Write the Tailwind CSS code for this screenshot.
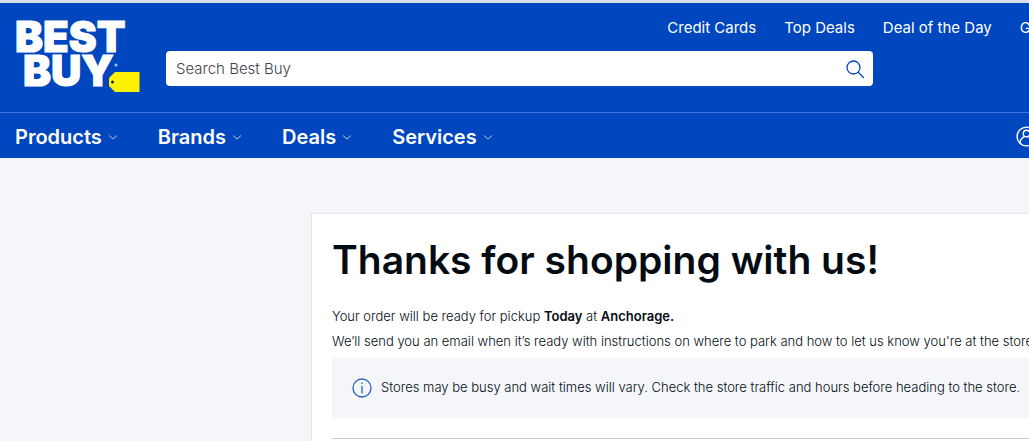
<!DOCTYPE html>
<html lang="en">
<head>
    <meta charset="UTF-8">
    <meta name="viewport" content="width=device-width, initial-scale=1.0">
    <title>Order Confirmation - Best Buy</title>
    <script src="https://cdn.jsdelivr.net/npm/@tailwindcss/browser@4"></script>
</head>
<body class="flex min-h-screen flex-col overflow-x-hidden bg-[#f4f6fa] font-['Inter',sans-serif] text-[#040c13]">
    <header class="border-t-3 border-[#d9dfe8] bg-[#0046be] text-white">
        <div class="flex h-[109px] overflow-hidden">
            <a href="#" aria-label="Best Buy" class="w-[166px] shrink-0">
                <svg class="h-[109px] w-[166px]" viewBox="0 3 166 109">
                    <g fill="#fff" stroke="#fff" stroke-width="1" font-family="Inter, sans-serif" font-weight="900" font-size="42">
                        <text x="15" y="52">BEST</text>
                        <text x="23" y="86">BUY</text>
                    </g>
                    <circle cx="116" cy="65" r="1.5" fill="#a9c2ee"/>
                    <path d="M115 72H139.500V92H115L109 86V78Z" fill="#fff200"/>
                    <circle cx="112.500" cy="82" r="1.500" fill="#1d252c"/>
                </svg>
            </a>
            <div class="min-w-0 grow">
                <nav class="-mr-0.5 flex h-12 items-center justify-end gap-7 pt-0.5 text-[15px] whitespace-nowrap">
                    <a href="#">Credit Cards</a>
                    <a href="#">Top Deals</a>
                    <a href="#">Deal of the Day</a>
                    <a href="#">G</a>
                </nav>
                <form class="flex h-[35px] max-w-[707px] items-center rounded bg-white">
                    <input type="text" aria-label="Search Best Buy" placeholder="Search Best Buy" class="h-full min-w-0 grow rounded px-2.5 text-[15px] font-light text-[#1d252c] outline-none placeholder:text-[#40444a]">
                    <button type="button" aria-label="Search" class="px-2">
                        <svg class="size-5" viewBox="0 0 20 20" fill="none" stroke="#0046be" stroke-width="1.3">
                            <circle cx="8.500" cy="8.500" r="6.500"/>
                            <path d="M13 13L19 19"/>
                        </svg>
                    </button>
                </form>
            </div>
        </div>
        <div class="flex h-[46px] items-center justify-between overflow-hidden border-t border-[#3f76dc] pt-0.5 pl-[15px]">
            <nav class="flex gap-10 text-[20px] font-semibold">
                <button type="button" class="flex items-center gap-1.5">Products
                    <svg class="size-2.5" viewBox="0 0 10 10" fill="none" stroke="#b8ccf2"><path d="M1 3.500L5 7L9 3.500"/></svg>
                </button>
                <button type="button" class="flex items-center gap-1.5">Brands
                    <svg class="size-2.5" viewBox="0 0 10 10" fill="none" stroke="#b8ccf2"><path d="M1 3.500L5 7L9 3.500"/></svg>
                </button>
                <button type="button" class="flex items-center gap-1.5">Deals
                    <svg class="size-2.5" viewBox="0 0 10 10" fill="none" stroke="#b8ccf2"><path d="M1 3.500L5 7L9 3.500"/></svg>
                </button>
                <button type="button" class="flex items-center gap-1.5">Services
                    <svg class="size-2.5" viewBox="0 0 10 10" fill="none" stroke="#b8ccf2"><path d="M1 3.500L5 7L9 3.500"/></svg>
                </button>
            </nav>
            <button type="button" aria-label="Account" class="-mr-2">
                <svg class="size-[21px]" viewBox="0 0 21 21" fill="none" stroke="#fff" stroke-width="1.4">
                    <circle cx="10.500" cy="10.500" r="9.400"/>
                    <circle cx="10.500" cy="7.500" r="3.300"/>
                    <path d="M4 17C4.300 13.500 6.200 11.500 8.500 10.600M17 17C16.700 13.500 14.500 11.500 12.500 10.600"/>
                </svg>
            </button>
        </div>
    </header>

    <main class="mt-[55px] ml-[311px] grow overflow-hidden border-t border-l border-[#dfe3ea] bg-white pl-5 whitespace-nowrap">
        <h1 class="mt-5 text-[39px] leading-[52px] font-semibold">Thanks for shopping with us!</h1>
        <div class="mt-[18px] text-[13px] leading-[25px] font-light">
            <p>Your order will be ready for pickup <b class="font-semibold">Today</b> at <b class="font-semibold">Anchorage.</b></p>
            <p>We’ll send you an email when it’s ready with instructions on where to park and how to let us know you're at the store</p>
        </div>
        <div class="mt-1 flex h-[60px] items-center gap-[9px] bg-[#f4f6fa] pl-5 text-[13px] font-light">
            <svg class="size-5 shrink-0" viewBox="0 0 20 20" fill="none" stroke="#2360c9" stroke-width="1.300">
                <circle cx="10" cy="10" r="9"/>
                <path d="M10 8V15.500M10 4.500V6"/>
            </svg>
            <p>Stores may be busy and wait times will vary. Check the store traffic and hours before heading to the store.</p>
        </div>
        <hr class="mt-5 border-[#c5cbd5]">
    </main>
</body>
</html>
